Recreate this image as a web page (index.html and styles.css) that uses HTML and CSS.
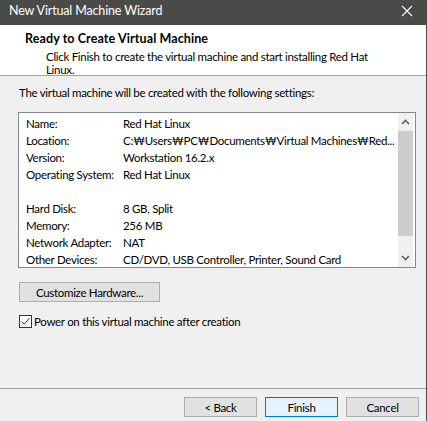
FILE: index.html
```html
<!DOCTYPE html>
<html>
<head>
<meta charset="utf-8">
<link rel="stylesheet" href="styles.css">
</head>
<body>
<div class="window">
  <div class="titlebar">
    <span class="title">New Virtual Machine Wizard</span>
    <svg class="close" width="12" height="12" viewBox="0 0 12 12"><path d="M1 1 L11 11 M11 1 L1 11" stroke="#ffffff" stroke-width="1.1" fill="none"/></svg>
  </div>
  <div class="header">
    <div class="h-title">Ready to Create Virtual Machine</div>
    <div class="h-desc">Click Finish to create the virtual machine and start installing Red Hat Linux.</div>
  </div>
  <div class="content">
    <div class="intro">The virtual machine will be created with the following settings:</div>
    <div class="listbox">
      <div class="rows">
        <div class="row"><span class="k">Name:</span><span class="v">Red Hat Linux</span></div>
        <div class="row"><span class="k">Location:</span><span class="v">C:₩Users₩PC₩Documents₩Virtual Machines₩Red...</span></div>
        <div class="row"><span class="k">Version:</span><span class="v">Workstation 16.2.x</span></div>
        <div class="row"><span class="k">Operating System:</span><span class="v">Red Hat Linux</span></div>
        <div class="row"><span class="k"></span><span class="v"></span></div>
        <div class="row"><span class="k">Hard Disk:</span><span class="v">8 GB, Split</span></div>
        <div class="row"><span class="k">Memory:</span><span class="v">256 MB</span></div>
        <div class="row"><span class="k">Network Adapter:</span><span class="v">NAT</span></div>
        <div class="row"><span class="k">Other Devices:</span><span class="v">CD/DVD, USB Controller, Printer, Sound Card</span></div>
      </div>
      <div class="scrollbar">
        <div class="arrow">
          <svg width="9" height="6" viewBox="0 0 9 6"><path d="M1 5 L4.5 1.5 L8 5" stroke="#606060" stroke-width="1.6" fill="none"/></svg>
        </div>
        <div class="thumb"></div>
        <div class="track"></div>
        <div class="arrow">
          <svg width="9" height="6" viewBox="0 0 9 6"><path d="M1 1 L4.5 4.5 L8 1" stroke="#606060" stroke-width="1.6" fill="none"/></svg>
        </div>
      </div>
    </div>
    <button class="btn customize">Customize Hardware...</button>
    <label class="check">
      <span class="box"><svg width="11" height="11" viewBox="0 0 11 11"><path d="M1.5 5.5 L4.2 8.3 L9.5 2" stroke="#333333" stroke-width="1" fill="none"/></svg></span>
      <span>Power on this virtual machine after creation</span>
    </label>
  </div>
  <div class="footer">
    <button class="btn">&lt; Back</button>
    <button class="btn primary">Finish</button>
    <button class="btn">Cancel</button>
  </div>
</div>
</body>
</html>
```

FILE: styles.css
```css
html, body {
  margin: 0;
  padding: 0;
  background: #f0f0f0;
}
.window {
  width: 426px;
  height: 421px;
  border-right: 1px solid #4a4a4a;
  background: #f0f0f0;
  font-family: Lato, "Open Sans", sans-serif;
  font-size: 11.5px;
  letter-spacing: -0.3px;
  color: #000;
  display: flex;
  flex-direction: column;
}
.titlebar {
  height: 25px;
  background: #4a4a48;
  color: #ffffff;
  display: flex;
  align-items: center;
  justify-content: space-between;
  padding: 0 13px 0 9px;
  flex-shrink: 0;
}
.title {
  font-size: 12.5px;
  letter-spacing: -0.15px;
  position: relative;
  top: -2px;
}
.close { position: relative; top: -2px; }
.header {
  background: #ffffff;
  height: 51px;
  border-bottom: 1px solid #a0a0a0;
  padding: 6px 0 0 25px;
  box-sizing: border-box;
  flex-shrink: 0;
}
.h-title {
  font-weight: bold;
  font-size: 12.5px;
  letter-spacing: 0.1px;
  line-height: 16px;
}
.h-desc {
  padding-left: 21px;
  width: 330px;
  line-height: 13px;
  margin-top: 3px;
}
.content {
  flex: 1;
  padding: 9px 0 0 18px;
}
.intro {
  line-height: 16px;
  padding-left: 1px;
}
.listbox {
  margin-top: 11px;
  width: 398px;
  height: 156px;
  box-sizing: border-box;
  border: 1px solid #828790;
  background: #ffffff;
  display: flex;
}
.rows {
  flex: 1;
  min-width: 0;
  padding: 2px 0 0 7px;
}
.row {
  display: flex;
  height: 17px;
  line-height: 17px;
  white-space: nowrap;
}
.k { width: 97px; flex-shrink: 0; }
.v { flex: 1; overflow: hidden; }
.scrollbar {
  width: 15px;
  flex-shrink: 0;
  margin: 0 2px 0 0;
  background: #f0f0f0;
  display: flex;
  flex-direction: column;
}
.arrow {
  height: 18px;
  display: flex;
  align-items: center;
  justify-content: center;
  flex-shrink: 0;
}
.thumb {
  height: 105px;
  background: #cdcdcd;
  flex-shrink: 0;
}
.track { flex: 1; }
.btn {
  font-family: inherit;
  font-size: 11.5px;
  letter-spacing: -0.3px;
  background: #e1e1e1;
  border: 1px solid #adadad;
  height: 20px;
  padding: 0;
  color: #000;
  line-height: 17px;
}
.customize {
  display: block;
  margin-top: 14px;
  width: 141px;
  margin-left: 1px;
}
.check {
  display: flex;
  align-items: center;
  margin-top: 13px;
  margin-left: 1px;
  gap: 2px;
}
.box {
  width: 11px;
  height: 11px;
  border: 1px solid #333333;
  background: #ffffff;
  display: flex;
}
.footer {
  height: 33px;
  border-top: 1px solid #a0a0a0;
  display: flex;
  justify-content: flex-end;
  gap: 8px;
  padding: 8px 7px 0 0;
  box-sizing: border-box;
  flex-shrink: 0;
}
.footer .btn { width: 73px; }
.primary {
  background: #e5f1fb;
  border-color: #0078d7;
}
```
